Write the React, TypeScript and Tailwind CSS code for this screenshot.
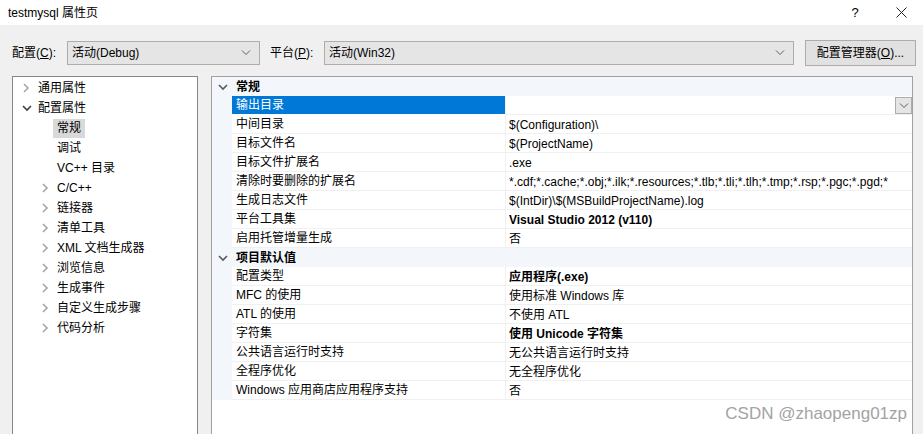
import React from "react";

const FONT = { fontFamily: '"Liberation Sans", "Noto Sans CJK SC", sans-serif' };

function ChevRight({ color = "#a6a6a6" }: { color?: string }) {
  return (
    <svg width="8" height="10" viewBox="0 0 8 10" className="shrink-0">
      <polyline points="2,1 6,5 2,9" fill="none" stroke={color} strokeWidth="1.6" />
    </svg>
  );
}
function ChevDown({ color = "#404040", w = 10 }: { color?: string; w?: number }) {
  return (
    <svg width={w} height="8" viewBox="0 0 10 8" className="shrink-0">
      <polyline points="1,2 5,6 9,2" fill="none" stroke={color} strokeWidth="1.6" />
    </svg>
  );
}
function ComboChev() {
  return (
    <svg width="10" height="6" viewBox="0 0 10 6">
      <polyline points="1,0.5 5,4.5 9,0.5" fill="none" stroke="#606060" strokeWidth="1" />
    </svg>
  );
}

type TreeItem = { label: string; level: 0 | 1; state: "open" | "closed" | "leaf"; selected?: boolean };
const tree: TreeItem[] = [
  { label: "通用属性", level: 0, state: "closed" },
  { label: "配置属性", level: 0, state: "open" },
  { label: "常规", level: 1, state: "leaf", selected: true },
  { label: "调试", level: 1, state: "leaf" },
  { label: "VC++ 目录", level: 1, state: "leaf" },
  { label: "C/C++", level: 1, state: "closed" },
  { label: "链接器", level: 1, state: "closed" },
  { label: "清单工具", level: 1, state: "closed" },
  { label: "XML 文档生成器", level: 1, state: "closed" },
  { label: "浏览信息", level: 1, state: "closed" },
  { label: "生成事件", level: 1, state: "closed" },
  { label: "自定义生成步骤", level: 1, state: "closed" },
  { label: "代码分析", level: 1, state: "closed" },
];

type Row =
  | { kind: "cat"; label: string }
  | { kind: "prop"; name: string; value: string; bold?: boolean; selected?: boolean };

const rows: Row[] = [
  { kind: "cat", label: "常规" },
  { kind: "prop", name: "输出目录", value: "", selected: true },
  { kind: "prop", name: "中间目录", value: "$(Configuration)\\" },
  { kind: "prop", name: "目标文件名", value: "$(ProjectName)" },
  { kind: "prop", name: "目标文件扩展名", value: ".exe" },
  {
    kind: "prop",
    name: "清除时要删除的扩展名",
    value: "*.cdf;*.cache;*.obj;*.ilk;*.resources;*.tlb;*.tli;*.tlh;*.tmp;*.rsp;*.pgc;*.pgd;*",
  },
  { kind: "prop", name: "生成日志文件", value: "$(IntDir)\\$(MSBuildProjectName).log" },
  { kind: "prop", name: "平台工具集", value: "Visual Studio 2012 (v110)", bold: true },
  { kind: "prop", name: "启用托管增量生成", value: "否" },
  { kind: "cat", label: "项目默认值" },
  { kind: "prop", name: "配置类型", value: "应用程序(.exe)", bold: true },
  { kind: "prop", name: "MFC 的使用", value: "使用标准 Windows 库" },
  { kind: "prop", name: "ATL 的使用", value: "不使用 ATL" },
  { kind: "prop", name: "字符集", value: "使用 Unicode 字符集", bold: true },
  { kind: "prop", name: "公共语言运行时支持", value: "无公共语言运行时支持" },
  { kind: "prop", name: "全程序优化", value: "无全程序优化" },
  { kind: "prop", name: "Windows 应用商店应用程序支持", value: "否" },
];

export default function App() {
  return (
    <div className="relative w-[923px] h-[434px] overflow-hidden bg-[#f0f0f0] text-[12px] text-black" style={FONT}>
      {/* title bar */}
      <div className="h-[25px] bg-white flex items-center pl-[8px]">
        <span className="flex-1 leading-none">testmysql 属性页</span>
        <span className="w-[14px] text-center text-[13px] mr-[34px] leading-none">?</span>
        <svg width="11" height="11" viewBox="0 0 11 11" className="mr-[16px]">
          <path d="M0.5 0.5 L10.5 10.5 M10.5 0.5 L0.5 10.5" stroke="#222" strokeWidth="1" />
        </svg>
      </div>

      {/* toolbar */}
      <div className="flex items-center h-[26px] mt-[15px] pl-[12px]">
        <span className="w-[55px]">
          配置(<span className="underline">C</span>):
        </span>
        <div className="w-[193px] h-[24px] bg-[#e5e5e5] border border-[#adadad] flex items-center pl-[4px] pr-[8px]">
          <span className="flex-1">活动(Debug)</span>
          <ComboChev />
        </div>
        <span className="ml-[10px] w-[54px]">
          平台(<span className="underline">P</span>):
        </span>
        <div className="w-[470px] h-[24px] bg-[#e5e5e5] border border-[#adadad] flex items-center pl-[4px] pr-[8px]">
          <span className="flex-1">活动(Win32)</span>
          <ComboChev />
        </div>
        <div className="ml-[11px] w-[111px] h-[26px] bg-[#e1e1e1] border border-[#adadad] flex items-center justify-center">
          配置管理器(<span className="underline">O</span>)...
        </div>
      </div>

      {/* panels */}
      <div className="flex mt-[10px] pl-[12px] h-[400px]">
        {/* tree */}
        <div className="w-[186px] h-full bg-white border border-[#828790] pt-[1px]">
          {tree.map((t, i) => (
            <div key={i} className="h-[20px] flex items-center">
              <div className={t.level === 0 ? "w-[25px] pl-[9px] flex items-center" : "w-[44px] pl-[28px] flex items-center"}>
                {t.state === "closed" && <ChevRight />}
                {t.state === "open" && <ChevDown />}
              </div>
              <span
                className={
                  t.selected
                    ? "bg-[#d9d9d9] h-[19px] leading-[19px] px-[4px] -ml-[4px]"
                    : ""
                }
              >
                {t.label}
              </span>
            </div>
          ))}
        </div>

        {/* property grid */}
        <div className="ml-[13px] w-[702px] h-full bg-white border border-[#a0a0a0] overflow-hidden">
          {rows.map((r, i) =>
            r.kind === "cat" ? (
              <div key={i} className="h-[19px] flex items-center pt-[1px] bg-[#f3f6fb]">
                <div className="w-[20px] flex justify-center pl-[2px]">
                  <ChevDown color="#595959" w={10} />
                </div>
                <span className="pl-[4px] font-bold">{r.label}</span>
              </div>
            ) : (
              <div key={i} className="h-[19px] flex">
                <div className="w-[20px] bg-[#f3f6fb] shrink-0" />
                <div
                  className={
                    r.selected
                      ? "w-[273px] shrink-0 bg-[#0078d7] text-white pl-[4px] pt-[1px] leading-[17px] h-[18px] whitespace-nowrap"
                      : "w-[273px] shrink-0 pl-[4px] pt-[1px] leading-[17px] border-b border-[#f0f0f0] whitespace-nowrap"
                  }
                >
                  {r.name}
                </div>
                <div className="flex-1 min-w-0 border-l border-b border-[#f0f0f0] pl-[3px] pt-[1px] flex items-center overflow-hidden">
                  <span className={"flex-1 whitespace-nowrap overflow-hidden " + (r.bold ? "font-bold" : "")}>{r.value}</span>
                  {r.selected && (
                    <div className="w-[17px] h-[17px] bg-[#e5e5e5] border border-[#adadad] flex items-center justify-center shrink-0">
                      <ComboChev />
                    </div>
                  )}
                </div>
              </div>
            )
          )}
        </div>
      </div>

      {/* watermark */}
      <div className="absolute right-[16px] top-[405px] text-[17px] text-[#a3a3a3] leading-none">
        CSDN @zhaopeng01zp
      </div>
    </div>
  );
}
